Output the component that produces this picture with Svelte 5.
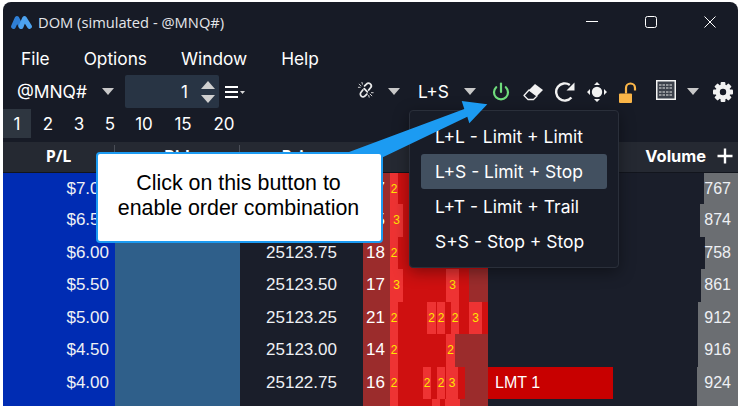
<script lang="ts">
  const menus = ["File", "Options", "Window", "Help"];
  const depths = ["1", "2", "3", "5", "10", "15", "20"];
  const combos = ["L+L - Limit + Limit", "L+S - Limit + Stop", "L+T - Limit + Trail", "S+S - Stop + Stop"];

  // segments of the footprint column: [width, kind, label]
  const rows = [
    { pl: "$7.00", price: "", count: "17", vol: 767, bar: 34, seg: [[8, "l", "2"], [90, "r", ""]] },
    { pl: "$6.50", price: "", count: "15", vol: 874, bar: 38, seg: [[13, "l", "3"], [85, "r", ""]] },
    { pl: "$6.00", price: "25123.75", count: "18", vol: 758, bar: 33, seg: [[8, "l", "2"], [90, "r", ""]] },
    { pl: "$5.50", price: "25123.50", count: "17", vol: 861, bar: 37, seg: [[13, "l", "3"], [43, "r", ""], [13, "l", "3"], [10, "r", ""]] },
    { pl: "$5.00", price: "25123.25", count: "21", vol: 912, bar: 40, seg: [[8, "l", "2"], [29, "r", ""], [9, "l", "2"], [1, "r", ""], [8, "l", "2"], [6, "r", ""], [8, "l", "2"], [10, "r", ""], [13, "l", "3"], [6, "r", ""]] },
    { pl: "$4.50", price: "25123.00", count: "14", vol: 916, bar: 40, seg: [[8, "l", "2"], [48, "r", ""], [9, "l", "2"]] },
    { pl: "$4.00", price: "25122.75", count: "16", vol: 924, bar: 41, order: "LMT 1", seg: [[8, "l", "2"], [25, "r", ""], [8, "l", "2"], [6, "r", ""], [8, "l", "2"], [1, "r", ""], [12, "l", "3"], [7, "r", ""]] },
    { pl: "", price: "", count: "", vol: "", bar: 41, seg: [[8, "l", ""], [34, "r", ""], [8, "l", ""], [5, "r", ""], [15, "l", ""]] },
  ];

  const gearTeeth = [0, 45, 90, 135];
</script>

<div class="window">
  <header class="titlebar">
    <svg class="logo" width="21" height="13" viewBox="0 0 21 13">
      <path d="M2.5 10.5 L6 2.5 L10 10.5" fill="none" stroke="#2f7fd6" stroke-width="4.8" stroke-linecap="round" stroke-linejoin="round" />
      <path d="M10 10.5 L13.5 2.5 L18.5 10.5" fill="none" stroke="#4da3f0" stroke-width="4.8" stroke-linecap="round" stroke-linejoin="round" />
    </svg>
    <span class="title">DOM (simulated - @MNQ#)</span>
    <div class="wincontrols">
      <svg width="12" height="12" viewBox="0 0 12 12"><path d="M0 5.5H12" stroke="#fff" stroke-width="1" /></svg>
      <svg width="12" height="12" viewBox="0 0 12 12"><rect x=".5" y=".5" width="11" height="11" rx="2" fill="none" stroke="#fff" /></svg>
      <svg width="12" height="12" viewBox="0 0 12 12"><path d="M.5 .5L11.5 11.5M11.5 .5L.5 11.5" stroke="#fff" stroke-width="1" /></svg>
    </div>
  </header>

  <nav class="menubar">
    {#each menus as m}
      <span>{m}</span>
    {/each}
  </nav>

  <div class="toolbar">
    <span class="symbol">@MNQ#</span>
    <span class="caret symbol-caret"></span>
    <div class="spinner">
      <span class="qty">1</span>
      <div class="arrows">
        <span class="up"></span>
        <span class="down"></span>
      </div>
    </div>
    <svg class="list-icon" width="20" height="14" viewBox="0 0 20 14">
      <path d="M0 2H13M0 7H13M0 12H13" stroke="#fff" stroke-width="2" />
      <path d="M15 6H20L17.5 9Z" fill="#d8d8d8" />
    </svg>

    <div class="tools">
      <svg class="link" width="18" height="18" viewBox="0 0 20 20" fill="none" stroke="#e8e8e8" stroke-width="2" stroke-linecap="round">
        <path d="M8.5 5.5L10.5 3.5A3 3 0 0 1 15 7.5L13 10" />
        <path d="M11 14.5L9 16.5A3 3 0 0 1 4.5 12.5L6.5 10" />
        <path d="M8 8.5L11.5 12" />
        <path d="M2.5 3.5L4.5 5.5M5.5 1.5L6 3.5M1.5 7H3.5M16.5 16.5L14.5 14.5M13.5 18L13 16M18 13H16" stroke-width="1" />
      </svg>
      <span class="caret link-caret"></span>
      <span class="combo-label">L+S</span>
      <span class="caret combo-caret"></span>
      <svg class="power" width="20" height="20" viewBox="0 0 20 20" fill="none" stroke="#6fdc7c" stroke-width="2.2" stroke-linecap="round">
        <path d="M5.2 5.2A7 7 0 1 0 14.8 5.2" />
        <path d="M10 1.5V10" />
      </svg>
      <svg class="eraser" width="20" height="20" viewBox="0 0 20 20">
        <path d="M12 2L20 8L14 14L6 8Z" fill="#f2f2f2" />
        <path d="M6 8L14 14L10.5 17.5H5L1 13.5Z" fill="none" stroke="#f2f2f2" stroke-width="1.3" stroke-linejoin="round" />
      </svg>
      <svg class="refresh" width="20" height="20" viewBox="0 0 20 20" fill="none">
        <path d="M16.4 15.5A8.6 8.6 0 1 1 14.8 3" stroke="#f2f2f2" stroke-width="2.4" />
        <path d="M19.5 .5V8.5H11.5Z" fill="#f2f2f2" />
      </svg>
      <svg class="move" width="20" height="20" viewBox="0 0 20 20" fill="#f2f2f2">
        <circle cx="10" cy="10" r="5.2" />
        <path d="M10 0L13 3H7ZM10 20L13 17H7ZM0 10L3 7V13ZM20 10L17 7V13Z" />
      </svg>
      <svg class="lock" width="20" height="21" viewBox="0 0 20 21" fill="none">
        <rect x="1" y="11.5" width="13" height="9.5" rx="1" fill="#fbb648" />
        <path d="M8 11.5V6A4.5 4.5 0 0 1 17 6V8.5" stroke="#fbb648" stroke-width="2.2" />
      </svg>
      <svg class="grid-icon" width="20" height="20" viewBox="0 0 20 20">
        <rect x=".75" y=".75" width="18.5" height="18.5" fill="#3b404a" stroke="#f2f2f2" stroke-width="1.5" />
        <path d="M3 5H17M3 8H17M3 12H17M3 15H17" stroke="#e8e8e8" stroke-width="1" stroke-dasharray="2.5 1" />
      </svg>
      <span class="caret grid-caret"></span>
      <svg class="gear" width="20" height="20" viewBox="0 0 20 20">
        {#each gearTeeth as a}
          <rect x="7.6" y="0" width="4.8" height="20" rx="1" fill="#f2f2f2" transform="rotate({a} 10 10)" />
        {/each}
        <circle cx="10" cy="10" r="7.4" fill="#f2f2f2" />
        <circle cx="10" cy="10" r="3.2" fill="#171b26" />
      </svg>
    </div>
  </div>

  <div class="depths">
    {#each depths as d, i}
      <span class="depth" class:active={i === 0}>{d}</span>
    {/each}
  </div>

  <div class="grid-head">
    <span>P/L</span>
    <span>Bid</span>
    <span>Price</span>
    <span></span>
    <span></span>
    <span class="vol-head">Volume <svg width="16" height="16" viewBox="0 0 16 16"><path d="M8 .5V15.5M.5 8H15.5" stroke="#fff" stroke-width="2.4" /></svg></span>
  </div>

  <div class="ladder">
    {#each rows as r}
      <div class="row">
        <div class="pl">{r.pl}</div>
        <div class="bid"></div>
        <div class="price">{r.price}</div>
        <div class="foot">
          <span class="count">{r.count}</span>
          {#each r.seg as s}
            <span class="seg {s[1]}" style="width: {s[0]}px">{s[2]}</span>
          {/each}
        </div>
        <div class="orders">
          {#if r.order}<span class="order">{r.order}</span>{/if}
        </div>
        <div class="volume">
          <span class="volbar" style="width: {r.bar}px">{r.vol}</span>
        </div>
      </div>
    {/each}
  </div>

  <div class="combo-menu">
    {#each combos as c, i}
      <div class="combo" class:selected={i === 1}>{c}</div>
    {/each}
  </div>

  <svg class="arrow" width="735" height="404" viewBox="3 2 735 404">
    <path d="M487.3 104.3L461.7 101L464.3 109L345 153.5L352 172L467.3 116.7L469.3 123.3Z" fill="#1c9bf2" />
  </svg>

  <div class="callout">Click on this button to<br />enable order combination</div>
</div>

<style>
  :global(body) {
    background: #fff;
  }

  .window {
    position: relative;
    display: flex;
    flex-direction: column;
    width: 735px;
    height: 404px;
    margin: 2px 0 0 3px;
    background: #171b26;
    border-radius: 8px 8px 0 0;
    overflow: hidden;
    color: #fff;
    font-family: Inter, sans-serif;
  }

  .titlebar {
    display: flex;
    align-items: center;
    height: 40px;
    padding-left: 8px;
    flex-shrink: 0;
  }

  .title {
    margin-left: 6px;
    font-family: "Open Sans", sans-serif;
    font-size: 14.7px;
    color: #e4e6ea;
  }

  .wincontrols {
    display: flex;
    gap: 47px;
    margin-left: auto;
    margin-right: 22px;
  }

  .menubar {
    display: flex;
    height: 32px;
    align-items: center;
    gap: 34px;
    padding-left: 18px;
    font-size: 17.3px;
    flex-shrink: 0;
  }

  .toolbar {
    display: flex;
    align-items: center;
    height: 35px;
    flex-shrink: 0;
    padding-left: 14px;
  }

  .symbol {
    font-size: 17.4px;
    width: 70px;
  }

  .caret {
    display: block;
    width: 0;
    height: 0;
    border-left: 6px solid transparent;
    border-right: 6px solid transparent;
    border-top: 7px solid #c8c8c8;
  }

  .symbol-caret {
    margin-left: 15px;
  }

  .spinner {
    display: flex;
    align-items: center;
    justify-content: flex-end;
    width: 94px;
    height: 33px;
    margin-left: 11px;
    background: #283444;
    border-radius: 2px;
    gap: 13px;
    padding-right: 4px;
    box-sizing: border-box;
  }

  .qty {
    font-size: 17px;
  }

  .arrows {
    display: flex;
    flex-direction: column;
    gap: 6px;
  }

  .up,
  .down {
    display: block;
    width: 0;
    height: 0;
    border-left: 7px solid transparent;
    border-right: 7px solid transparent;
  }

  .up {
    border-bottom: 8px solid #d0d0d0;
  }

  .down {
    border-top: 8px solid #d0d0d0;
  }

  .list-icon {
    margin-left: 6px;
  }

  .tools {
    display: flex;
    align-items: center;
    margin-left: auto;
    padding-right: 5px;
  }

  .link { margin-top: -3px; }
  .link-caret { margin-left: 13px; }
  .combo-label { margin-left: 18px; font-size: 17.4px; width: 33px; }
  .combo-caret { margin-left: 13px; }
  .power { margin-left: 15px; }
  .eraser { margin-left: 12px; }
  .refresh { margin-left: 12px; }
  .move { margin-left: 12px; }
  .lock { margin-left: 11px; margin-top: 1px; }
  .grid-icon { margin-left: 18px; margin-top: -3px; }
  .grid-caret { margin-left: 11px; }
  .gear { margin-left: 14px; }

  .depths {
    display: flex;
    height: 29px;
    flex-shrink: 0;
    font-size: 17px;
  }

  .depth {
    display: flex;
    align-items: center;
    justify-content: center;
    min-width: 28px;
    padding: 0 2px;
    box-sizing: border-box;
    margin-right: 3px;
  }

  .depth.active {
    background: #2e3640;
    width: 28px;
  }

  .depth:nth-child(n + 5) {
    margin-left: 3px;
    margin-right: 8px;
  }

  .depth:last-child {
    margin-left: 5px;
  }

  .grid-head {
    display: grid;
    grid-template-columns: 112px 125px 123px 125px 125px 125px;
    height: 31px;
    margin-top: 4px;
    padding-bottom: 2px;
    background: #252932;
    flex-shrink: 0;
    align-items: center;
    text-align: center;
    font-family: "Open Sans", sans-serif;
    font-weight: 700;
    font-size: 16px;
    box-sizing: border-box;
    border-bottom: 1px solid #12151d;
  }

  .grid-head span:nth-child(1),
  .grid-head span:nth-child(2) {
    border-right: 1px solid #4a4e57;
  }

  .vol-head {
    display: flex;
    align-items: center;
    justify-content: flex-end;
    gap: 11px;
    padding-right: 5px;
    font-family: Inter, sans-serif;
    font-size: 16.4px;
  }

  .row {
    display: grid;
    grid-template-columns: 112px 125px 123px 125px 125px 125px;
    height: 32.5px;
    font-family: "Liberation Sans", sans-serif;
    font-size: 17px;
    color: #eef0f4;
  }

  .row:first-child {
    height: 31px;
  }

  .pl {
    display: flex;
    align-items: center;
    justify-content: flex-end;
    padding-right: 6px;
    background: #002cb3;
  }

  .bid {
    background: #2f5f8a;
  }

  .price {
    display: flex;
    align-items: center;
    justify-content: center;
    background: #1a1e2a;
  }

  .foot {
    display: flex;
    background: #9b2c2c;
    font-size: 12px;
    color: #ffe500;
  }

  .count {
    display: flex;
    align-items: center;
    justify-content: flex-end;
    width: 27px;
    padding-right: 5px;
    box-sizing: border-box;
    font-size: 17px;
    color: #fff;
  }

  .seg {
    display: flex;
    align-items: center;
    justify-content: center;
  }

  .seg.l {
    background: #ee3333;
  }

  .seg.r {
    background: #cf1010;
  }

  .orders {
    background: #1a1e2a;
  }

  .order {
    display: flex;
    align-items: center;
    height: 100%;
    padding-left: 7px;
    background: #c80000;
    color: #fff;
    font-size: 16px;
  }

  .volume {
    display: flex;
    justify-content: flex-end;
    background: #1a1e2a;
    font-size: 16px;
  }

  .volbar {
    display: flex;
    align-items: center;
    justify-content: flex-end;
    padding-right: 7px;
    box-sizing: border-box;
    background: #6b6e72;
  }

  .arrow {
    position: absolute;
    left: 0;
    top: 0;
    pointer-events: none;
  }

  .callout {
    position: absolute;
    left: 93px;
    top: 150px;
    width: 287px;
    height: 91px;
    box-sizing: border-box;
    padding-bottom: 4px;
    padding-right: 2px;
    display: flex;
    align-items: center;
    justify-content: center;
    text-align: center;
    background: #fff;
    border: 2px solid #1c9bf2;
    border-radius: 4px;
    font-family: "Liberation Sans", sans-serif;
    font-size: 21.4px;
    line-height: 25px;
    color: #000;
  }

  .combo-menu {
    position: absolute;
    left: 406px;
    top: 108px;
    width: 210px;
    height: 158px;
    box-sizing: border-box;
    padding: 8px 11px;
    background: #181c27;
    border: 1px solid #2a2f3a;
    border-radius: 4px;
    box-shadow: 0 4px 16px rgba(0, 0, 0, 0.4);
    font-size: 17.5px;
  }

  .combo {
    display: flex;
    align-items: center;
    height: 35px;
    padding-left: 14px;
    border-radius: 3px;
  }

  .combo.selected {
    background: #425060;
  }
</style>
